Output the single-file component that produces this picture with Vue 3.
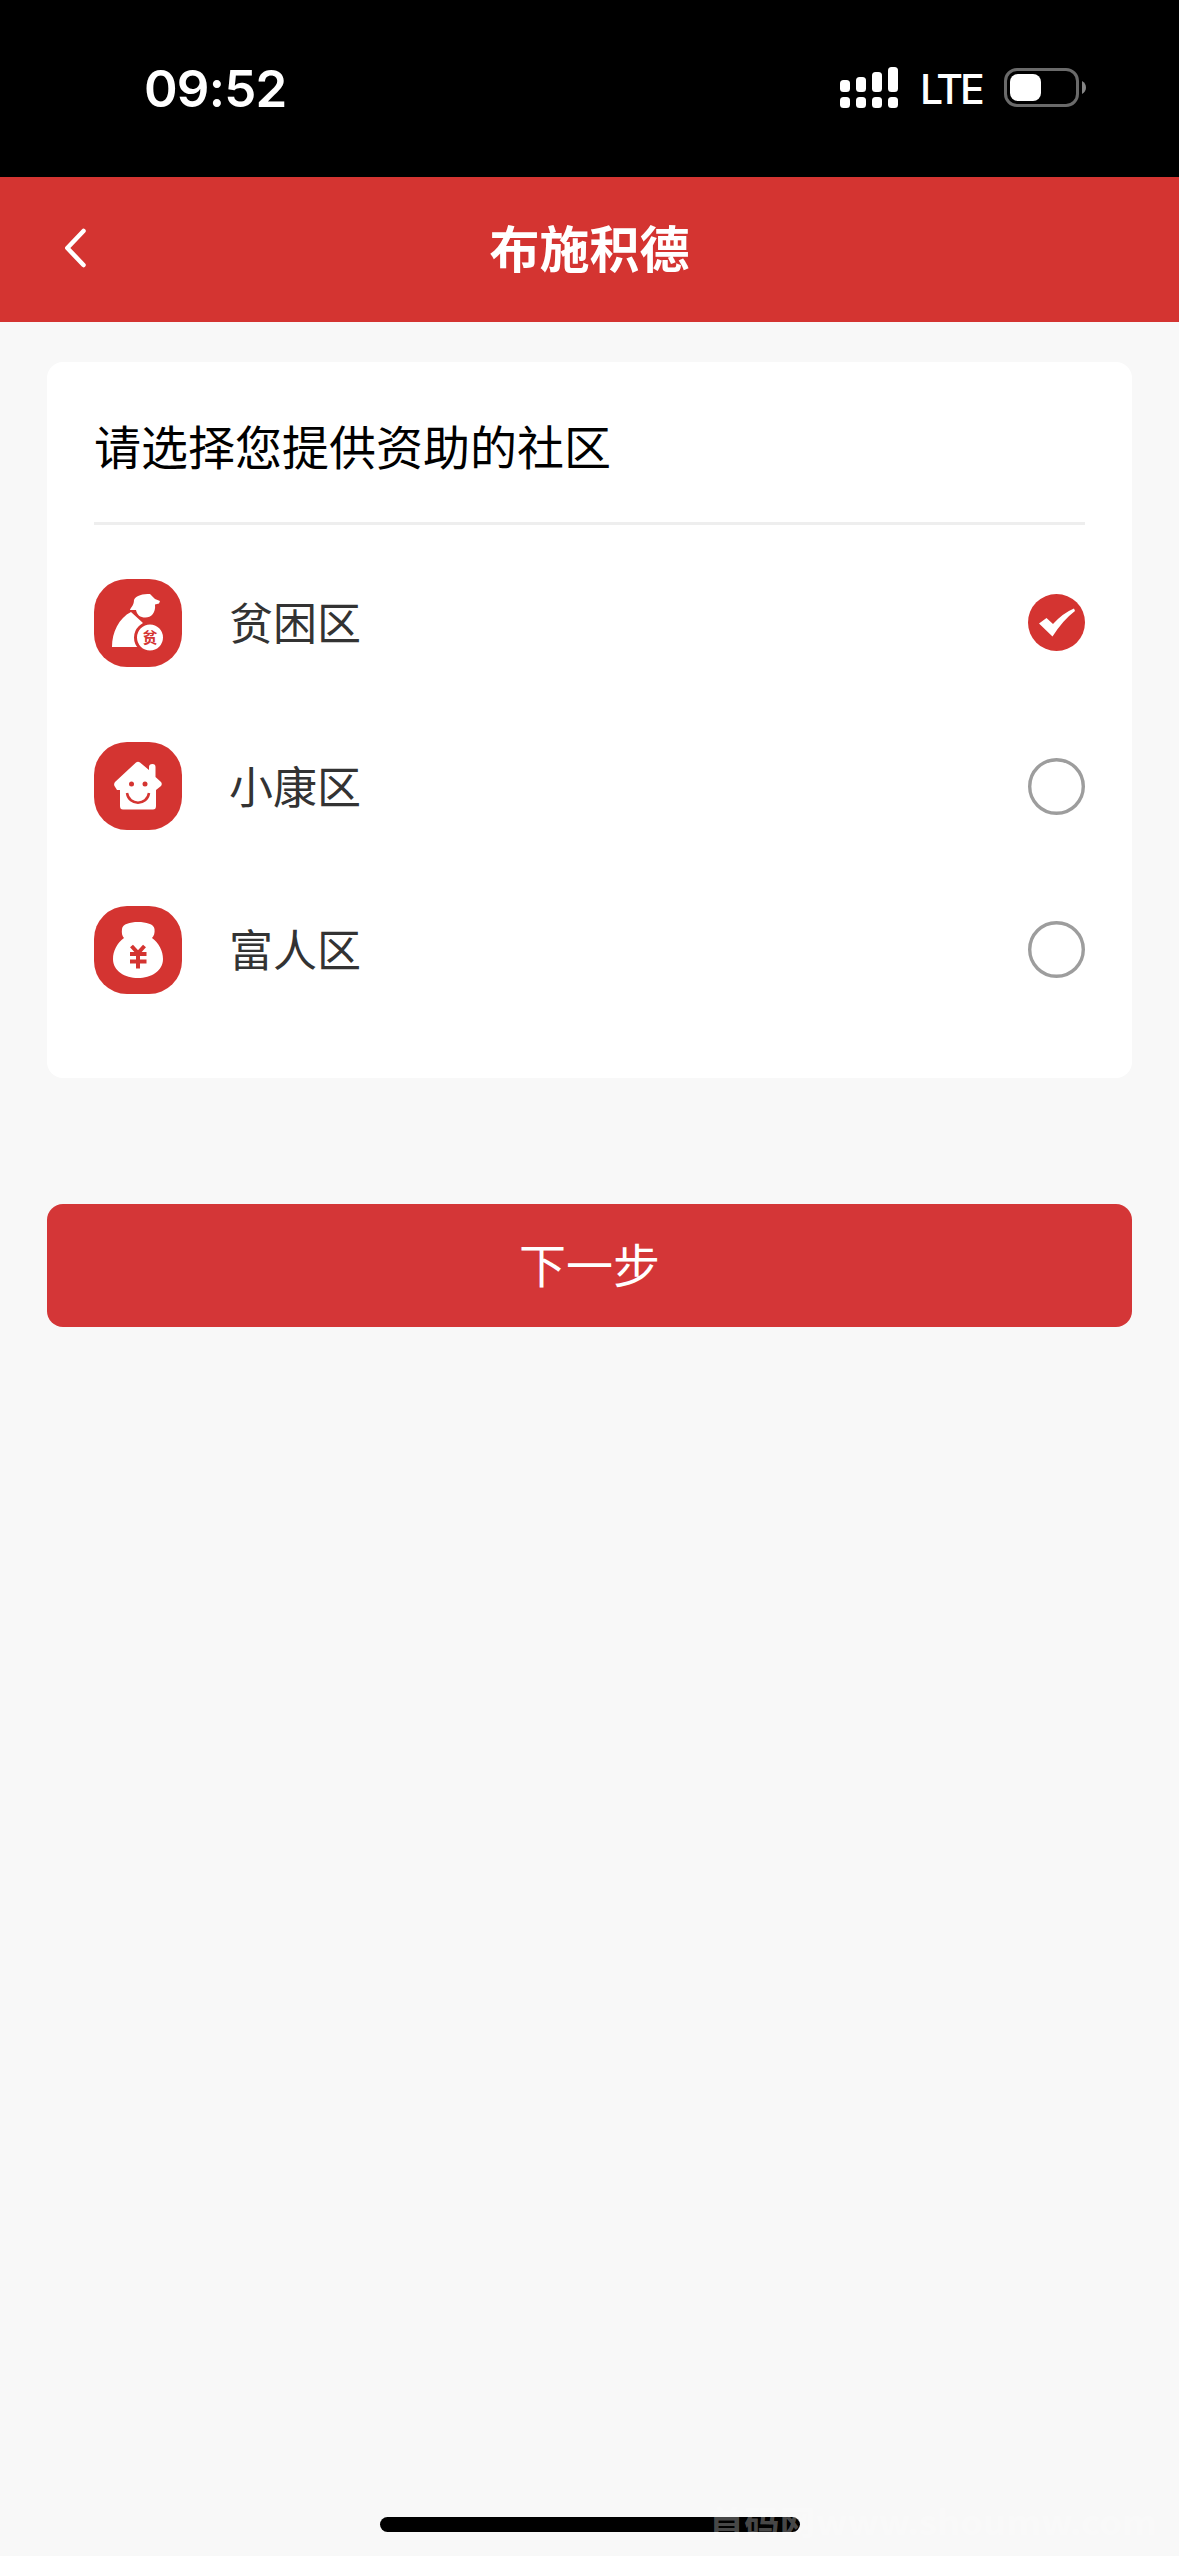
<template>
  <div class="page">
    <div class="status-bar">
      <span class="time">09:52</span>
      <div class="status-right">
        <svg class="signal" width="58" height="41" viewBox="0 0 58 41" fill="#fff">
          <rect x="0" y="13" width="10" height="12" rx="3.5" />
          <rect x="16" y="10" width="10" height="15" rx="3.5" />
          <rect x="32" y="5" width="10" height="20" rx="3.5" />
          <rect x="48" y="0" width="10" height="25" rx="3.5" />
          <rect v-for="n in 4" :key="n" :x="(n - 1) * 16" y="30" width="10" height="11" rx="3.5" />
        </svg>
        <span class="network">LTE</span>
        <svg class="battery" width="82" height="39" viewBox="0 0 82 39">
          <rect x="1.500" y="1.500" width="72" height="36" rx="11.500" fill="none" stroke="#6a6a6a" stroke-width="3" />
          <rect x="6" y="6" width="31" height="27" rx="8" fill="#fff" />
          <path d="M78 13c5.300 2.500 5.300 10.500 0 13z" fill="#858585" />
        </svg>
      </div>
    </div>

    <header class="nav-bar">
      <svg class="back" width="22" height="40" viewBox="0 0 22 40">
        <path d="M18.500 3L2.300 20L18.500 37" fill="none" stroke="#fff" stroke-width="4.500" stroke-linecap="round" stroke-linejoin="round" />
      </svg>
      <h1>布施积德</h1>
    </header>

    <main>
      <section class="card">
        <h2>请选择您提供资助的社区</h2>
        <ul>
          <li v-for="item in areas" :key="item.id" @click="selected = item.id">
            <svg class="area-icon" viewBox="0 0 88 88">
              <rect width="88" height="88" rx="33" fill="#d43431" />
              <g v-if="item.id === 'poor'">
                <path d="M36 31C36 29 40 27 40 21C42 16 49 15 56 15L61 20L66 22L65 24.500L61 25.500C62 34 57 38.500 51.500 38.500C46 38.500 43 36 42 31Z" fill="#fff" />
                <path d="M37 33L49 44C46 48 44 54 44 60L45 68H18C18 53 25 39 37 33Z" fill="#fff" />
                <circle cx="56" cy="58.500" r="14.500" fill="#fff" stroke="#d43431" stroke-width="3" />
                <text x="56" y="64" class="badge-text">贫</text>
              </g>
              <g v-else-if="item.id === 'middle'">
                <path d="M42 20.500Q44 19 46 20.500L55 28V25Q55 22 58.500 22Q61.500 22 61.500 25V35L67 40Q68.500 42 67 44L62 48V64Q62 67.500 59 67.500H29Q26 67.500 26 64V48H23L20.500 44Q19.500 42 21 40Z" fill="#fff" />
                <circle cx="37.500" cy="42" r="2.500" fill="#d43431" />
                <circle cx="51" cy="42" r="2.500" fill="#d43431" />
                <path d="M33 51C35 64 53 64 55 51" fill="none" stroke="#d43431" stroke-width="2.500" />
              </g>
              <g v-else>
                <path d="M30 32C28 30 27.500 27 28 23C28.500 18 36 16 44 16C52 16 60 18 60.500 23C61 27 60 30 58 32C65 37 69 45 69 53C69 65 57 72 44 72C31 72 19 65 19 53C19 45 23 37 30 32Z" fill="#fff" />
                <path d="M37.500 40L44 47L50.500 40M36 48H52.500M36 55.500H52.500M44 47V62.500" fill="none" stroke="#d43431" stroke-width="4" />
              </g>
            </svg>
            <span class="area-name">{{ item.name }}</span>
            <svg class="radio" viewBox="0 0 57 57">
              <template v-if="selected === item.id">
                <circle cx="28.500" cy="28.500" r="28.500" fill="#d43431" />
                <path d="M11 29.500L18.500 24L25 30Q35 19 46 14.500L47 17Q35 26 24.500 42.500Z" fill="#fff" />
              </template>
              <circle v-else cx="28.500" cy="28.500" r="26.800" fill="#fff" stroke="#9d9d9d" stroke-width="3.400" />
            </svg>
          </li>
        </ul>
      </section>
      <button class="next">下一步</button>
    </main>

    <div class="home-indicator"></div>
    <svg class="watermark" width="450" height="56" viewBox="0 0 450 56">
      <text x="0" y="42" textLength="106" lengthAdjust="spacingAndGlyphs">首码网</text>
      <text x="107" y="42" textLength="341" lengthAdjust="spacingAndGlyphs">www.shoumw.com</text>
    </svg>
  </div>
</template>

<script setup>
import { ref } from 'vue'

const selected = ref('poor')

const areas = [
  { id: 'poor', name: '贫困区' },
  { id: 'middle', name: '小康区' },
  { id: 'rich', name: '富人区' }
]
</script>

<style>
body {
  margin: 0;
  background: #f8f8f8;
}
</style>

<style scoped>
.page {
  position: relative;
  height: 2556px;
  background: #f8f8f8;
  font-family: "Noto Sans CJK SC", sans-serif;
  overflow: hidden;
}

.status-bar {
  display: flex;
  justify-content: space-between;
  box-sizing: border-box;
  height: 177px;
  padding: 67px 93px 0 144px;
  background: #000;
  color: #fff;
  font-family: Inter, sans-serif;
}

.time {
  font-size: 51px;
  font-weight: 600;
  line-height: 43px;
  letter-spacing: -0.8px;
}

.status-right {
  display: flex;
  align-items: flex-start;
}

.network {
  width: 60px;
  margin: 0 24px 0 22px;
  font-size: 41px;
  font-weight: 500;
  line-height: 44px;
  letter-spacing: -3px;
}

.battery {
  margin-top: 1px;
}

.nav-bar {
  display: grid;
  grid-template-columns: 65px 1fr 65px;
  align-items: center;
  height: 145px;
  background: #d43431;
  color: #fff;
}

.back {
  justify-self: end;
  margin: 0 -22px 3px 0;
}

h1 {
  margin: 0;
  font-size: 50px;
  font-weight: 700;
  line-height: 138px;
  height: 145px;
  text-align: center;
}

main {
  padding: 40px 47px 0;
}

.card {
  box-sizing: border-box;
  height: 716px;
  padding: 0 47px;
  border-radius: 16px;
  background: #fff;
}

h2 {
  margin: 0;
  height: 160px;
  border-bottom: 3px solid #eee;
  color: #000;
  font-size: 47px;
  font-weight: 400;
  line-height: 165px;
}

ul {
  margin: 0;
  padding: 16px 0 0;
  list-style: none;
}

li {
  display: flex;
  align-items: center;
  height: 163.5px;
}

.area-icon {
  width: 88px;
  height: 88px;
}

.area-name {
  flex: 1;
  margin-left: 47px;
  padding-bottom: 3px;
  color: #333;
  font-size: 44px;
}

.badge-text {
  fill: #d43431;
  font-size: 15px;
  font-weight: 700;
  text-anchor: middle;
}

.radio {
  width: 57px;
  height: 57px;
}

.next {
  display: block;
  width: 100%;
  height: 123px;
  margin-top: 126px;
  padding: 0 0 6px;
  border: 0;
  border-radius: 16px;
  background: #d43637;
  color: #fff;
  font-family: inherit;
  font-size: 47px;
  line-height: 117px;
}

.home-indicator {
  position: absolute;
  left: 380px;
  bottom: 24px;
  width: 420px;
  height: 15px;
  border-radius: 8px;
  background: #000;
}

.watermark {
  position: absolute;
  right: 20px;
  bottom: 7px;
  overflow: visible;
  fill: rgba(255, 255, 255, 0.3);
  font-size: 33px;
  font-weight: 700;
}
</style>
